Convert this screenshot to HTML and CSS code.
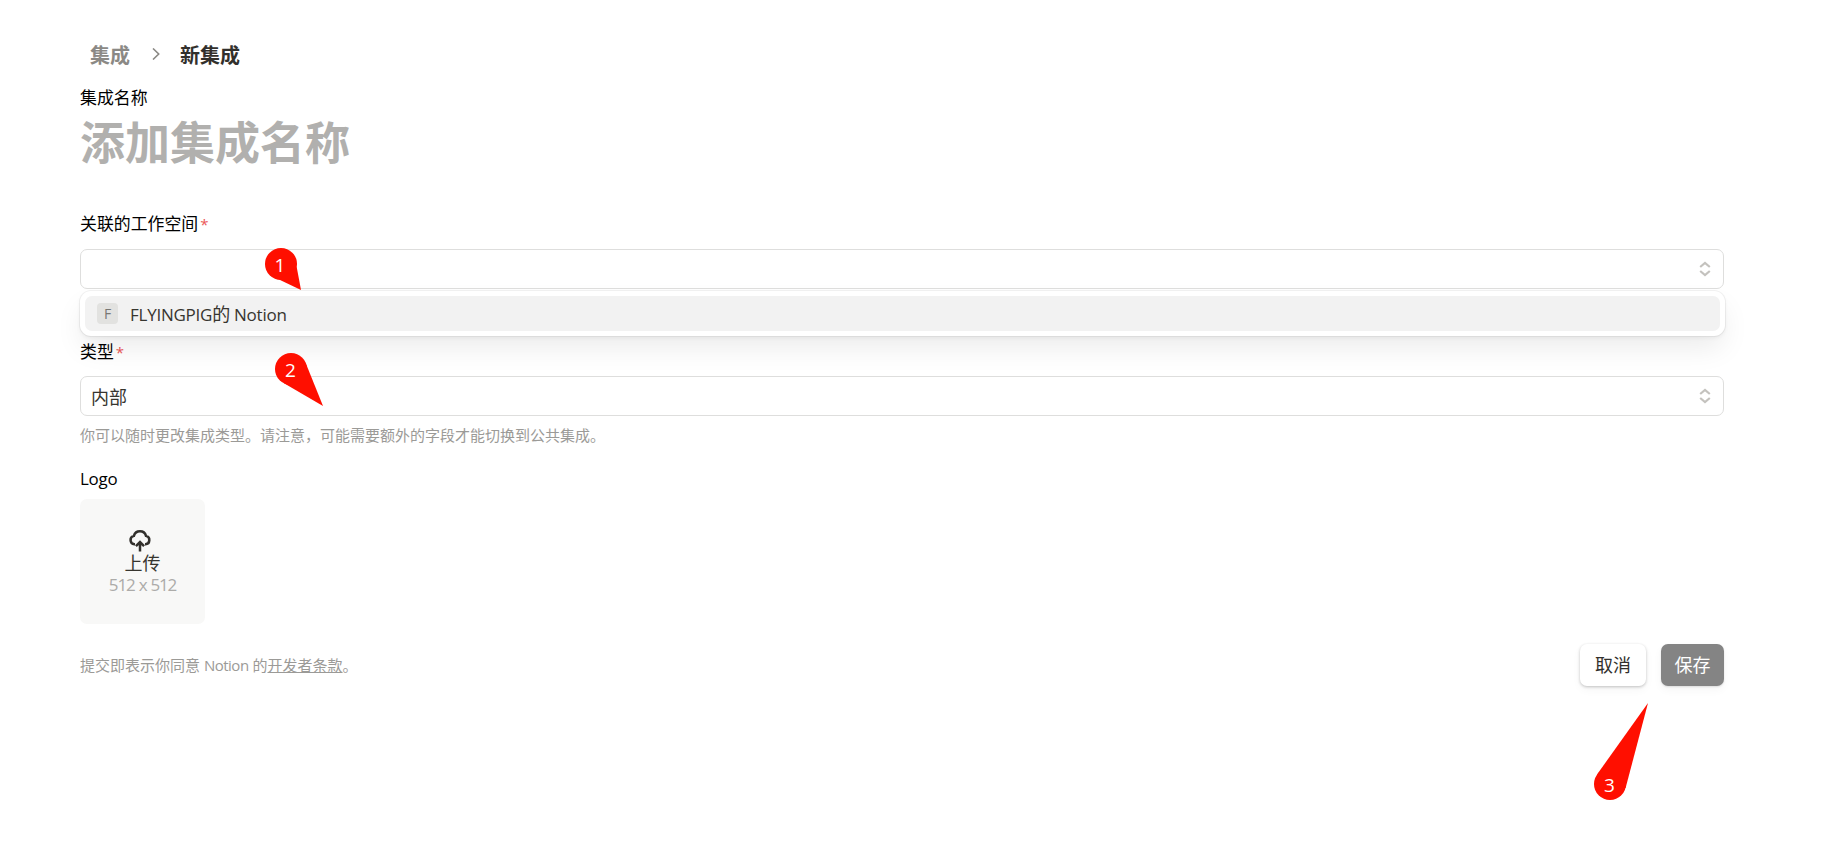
FILE: index.html
```html
<!DOCTYPE html>
<html lang="zh-CN">
<head>
    <meta charset="UTF-8">
    <meta name="viewport" content="width=device-width, initial-scale=1.0">
    <title>新集成</title>
    <link rel="stylesheet" href="styles.css">
</head>
<body>
    <main class="page">
        <nav class="breadcrumb">
            <a class="crumb">集成</a>
            <svg class="crumb-arrow" width="8" height="12" viewBox="0 0 8 12"><path d="M1 .5 6.700 6 1 11.500"/></svg>
            <span class="crumb current">新集成</span>
        </nav>

        <form class="integration-form">
            <!-- Name -->
            <label class="label" for="name">集成名称</label>
            <input class="name-input" type="text" id="name" placeholder="添加集成名称">

            <!-- Workspace -->
            <div class="label workspace-label">关联的工作空间<span class="required">*</span></div>
            <div class="select-wrap">
                <div class="select">
                    <span></span>
                    <svg class="select-icon" width="12" height="16" viewBox="0 0 12 16"><path d="M1.200 6 6 2l4.800 4M1.200 10 6 14l4.800-4"/></svg>
                </div>
                <div class="menu">
                    <div class="menu-item">
                        <span class="avatar">F</span>
                        <span class="menu-text">FLYINGPIG<span class="cjk">的</span> Notion</span>
                    </div>
                </div>
            </div>

            <!-- Type -->
            <div class="label type-label">类型<span class="required">*</span></div>
            <div class="select">
                <span class="select-value">内部</span>
                <svg class="select-icon" width="12" height="16" viewBox="0 0 12 16"><path d="M1.200 6 6 2l4.800 4M1.200 10 6 14l4.800-4"/></svg>
            </div>
            <p class="hint">你可以随时更改集成类型。请注意，可能需要额外的字段才能切换到公共集成。</p>

            <!-- Logo upload -->
            <div class="label logo-label">Logo</div>
            <div class="upload">
                <svg class="upload-icon" width="22" height="23" viewBox="0 0 22 23">
                    <path d="M6 15.2H5.400A4.200 4.200 0 0 1 4.900 6.900 6.300 6.300 0 0 1 17 6.900a4.200 4.200 0 0 1-.6 8.300H16"/>
                    <path d="M11 22.500V13M6.900 17.200 11 13.100l4.100 4.100"/>
                </svg>
                <span class="upload-text">上传</span>
                <span class="upload-size">512 x 512</span>
            </div>

            <div class="footer">
                <p class="terms">提交即表示你同意 <span class="latin">Notion</span> 的<a class="link">开发者条款</a>。</p>
                <div class="buttons">
                    <button class="btn" type="button">取消</button>
                    <button class="btn btn-save" type="button">保存</button>
                </div>
            </div>
        </form>
    </main>

    <!-- Step pins over the form -->
    <svg class="pins" width="1838" height="851" viewBox="0 0 1838 851">
        <circle cx="281" cy="264" r="16"/>
        <path d="M296.700 267 301 290 279 279.500Z"/>
        <text x="280" y="272">1</text>
        <circle cx="291" cy="369" r="16"/>
        <path d="M306.300 364.500 323 406 284 383.300Z"/>
        <text x="290.500" y="377">2</text>
        <circle cx="1610" cy="784" r="16"/>
        <path d="M1597 774.500 1648 703 1625.600 788Z"/>
        <text x="1609.500" y="792">3</text>
    </svg>
</body>
</html>
```

FILE: styles.css
```css
* {
    box-sizing: border-box;
}

body {
    margin: 0;
    background: #fff;
    color: #37352f;
    font-family: "Open Sans", "Noto Sans CJK SC", sans-serif;
    font-size: 18px;
}

.page {
    width: 1644px;
    min-height: 851px;
    margin-left: 80px;
    padding-top: 40px;
}

.breadcrumb {
    display: flex;
    align-items: center;
    height: 30px;
    padding-left: 10px;
    font-family: "Noto Sans CJK SC", sans-serif;
    font-size: 20px;
    font-weight: bold;
}

.crumb {
    color: #8b8985;
    line-height: 30px;
}

.current {
    color: #32302c;
}

.crumb-arrow {
    margin: 0 20px 2px 22px;
    fill: none;
    stroke: #8b8985;
    stroke-width: 1.6;
}

.integration-form {
    display: flex;
    flex-direction: column;
}

.label {
    height: 24px;
    margin-top: 16px;
    color: #000;
    font-size: 16.9px;
    line-height: 24px;
}

.name-input {
    height: 60px;
    padding: 0;
    border: 0;
    outline: none;
    font-family: "Noto Sans CJK SC", sans-serif;
    font-size: 45px;
    font-weight: bold;
}

.name-input::placeholder {
    color: #b1b0ae;
    opacity: 1;
}

.workspace-label {
    margin-top: 42px;
}

.required {
    margin-left: 2px;
    color: #eb5757;
    font-size: 15px;
}

.select-wrap {
    position: relative;
    margin-top: 13px;
}

.select {
    display: flex;
    align-items: center;
    justify-content: space-between;
    height: 40px;
    padding: 0 12px 0 10px;
    border: 1px solid #dededd;
    border-radius: 7px;
    line-height: 26px;
}

.select-value {
    padding-top: 2px;
}

.select-icon {
    fill: none;
    stroke: #c4c2be;
    stroke-width: 2.2;
}

.menu {
    position: absolute;
    top: 42px;
    left: 0;
    width: 1645px;
    height: 45px;
    padding: 5px;
    background: #fff;
    border-radius: 11px;
    box-shadow: 0 0 0 1px rgba(15, 15, 15, 0.05), 0 2px 4px rgba(15, 15, 15, 0.05), 0 14px 28px -2px rgba(15, 15, 15, 0.08);
}

.menu-item {
    display: flex;
    align-items: center;
    height: 35px;
    padding-left: 12px;
    background: #f2f2f2;
    border-radius: 7px;
}

.avatar {
    width: 21px;
    height: 21px;
    margin-right: 12px;
    background: #e2e2e0;
    border-radius: 4px;
    color: #787774;
    font-size: 14px;
    line-height: 22px;
    text-align: center;
}

.menu-text {
    padding-top: 2px;
    font-size: 17px;
    letter-spacing: -0.25px;
    line-height: 26px;
}

.cjk {
    font-size: 18px;
}

.type-label {
    margin-top: 51px;
    margin-bottom: 12px;
}

.hint {
    margin: 7px 0 0;
    color: #9b9a97;
    font-family: "Noto Sans CJK SC", sans-serif;
    font-size: 15px;
    line-height: 24px;
}

.logo-label {
    margin-top: 20px;
    letter-spacing: -0.2px;
}

.upload {
    display: flex;
    flex-direction: column;
    align-items: center;
    width: 125px;
    height: 125px;
    margin-top: 8px;
    padding-top: 30px;
    background: #f8f8f7;
    border-radius: 7px;
}

.upload-icon {
    margin-right: 6px;
    fill: none;
    stroke: #32302c;
    stroke-width: 2.5;
}

.upload-text {
    height: 22px;
    line-height: 22px;
}

.upload-size {
    color: #acaba9;
    font-size: 17px;
    letter-spacing: -1.2px;
    line-height: 21px;
    word-spacing: 1px;
}

.footer {
    display: flex;
    align-items: center;
    justify-content: space-between;
    height: 42px;
    margin-top: 20px;
}

.terms {
    margin: 0;
    color: #9b9a97;
    font-size: 15px;
    line-height: 24px;
}

.latin {
    letter-spacing: -0.5px;
}

.link {
    text-decoration: underline;
}

.buttons {
    display: flex;
    gap: 15px;
}

.btn {
    width: 66px;
    height: 42px;
    padding: 0 0 2px;
    background: #fff;
    border: 0;
    border-radius: 7px;
    box-shadow: 0 1px 3px rgba(15, 15, 15, 0.24), 0 4px 10px rgba(15, 15, 15, 0.04);
    color: #32302c;
    font-family: "Noto Sans CJK SC", sans-serif;
    font-size: 18px;
}

.btn-save {
    width: 63px;
    background: #848484;
    box-shadow: 0 1px 2px rgba(15, 15, 15, 0.12), 0 4px 10px rgba(15, 15, 15, 0.04);
    color: #fff;
}

.pins {
    position: absolute;
    top: 0;
    left: 0;
    fill: #ff0f00;
    pointer-events: none;
}

.pins text {
    fill: #fff;
    font-size: 19px;
    text-anchor: middle;
}
```
